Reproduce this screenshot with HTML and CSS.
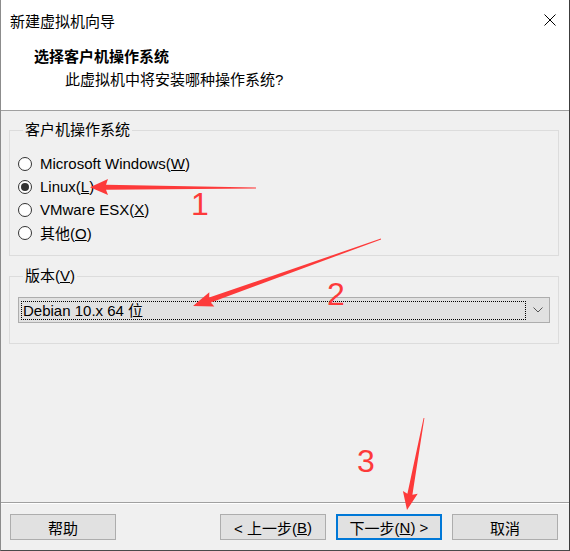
FILE: index.html
```html
<!DOCTYPE html>
<html lang="zh-CN">

<head>
  <meta charset="UTF-8" />
  <title>新建虚拟机向导</title>
  <link rel="stylesheet" href="styles.css">
</head>

<body>
  <div class="window">
    <!-- 顶部白色区域 -->
    <div class="top">
      <div class="titlebar">
        <span class="title">新建虚拟机向导</span>
        <svg class="close" width="12" height="12" viewBox="0 0 12 12">
          <path d="M0.5 0.5L11.5 11.5M11.5 0.5L0.5 11.5" stroke="#000" stroke-width="1" fill="none" />
        </svg>
      </div>
      <p class="heading">选择客户机操作系统</p>
      <p class="subtitle">此虚拟机中将安装哪种操作系统?</p>
    </div>

    <!-- 内容 -->
    <div class="content">
      <fieldset class="group os">
        <legend>客户机操作系统</legend>
        <div class="radio-row"><span class="ring"></span><span>Microsoft Windows(<u>W</u>)</span></div>
        <div class="radio-row"><span class="ring on"></span><span>Linux(<u>L</u>)</span></div>
        <div class="radio-row"><span class="ring"></span><span>VMware ESX(<u>X</u>)</span></div>
        <div class="radio-row"><span class="ring"></span><span>其他(<u>O</u>)</span></div>
      </fieldset>

      <fieldset class="group version">
        <legend>版本(<u>V</u>)</legend>
        <div class="combo">
          <div class="combo-focus">Debian 10.x 64 位</div>
          <div class="combo-arrow">
            <svg width="10" height="6" viewBox="0 0 10 6">
              <polyline points="0.5,0.5 5,5 9.5,0.5" stroke="#555" stroke-width="1" fill="none" />
            </svg>
          </div>
        </div>
      </fieldset>
    </div>

    <!-- 底部按钮 -->
    <div class="footer">
      <button class="btn">帮助</button>
      <div class="nav">
        <button class="btn">&lt; 上一步(<u>B</u>)</button>
        <button class="btn primary">下一步(<u>N</u>) &gt;</button>
        <button class="btn">取消</button>
      </div>
    </div>
  </div>

  <!-- 红色标注 -->
  <svg class="marks" width="570" height="551" viewBox="0 0 570 551">
    <polygon points="256,187.6 106,184.8 108,179 90,187.3 108,195 106,189.8 256,188.4" />
    <polygon points="380.9,238.6 209.2,297.6 209.3,292.2 193,306 214.3,306.4 210.8,302.4 381.1,239.4" />
    <polygon points="423.6,417.9 407.4,493.8 402.9,490.9 407,510 417.7,493.7 412.4,494.8 424.4,418.1" />
    <text x="191" y="215">1</text>
    <text x="327" y="305">2</text>
    <text x="357" y="472">3</text>
  </svg>
</body>

</html>
```

FILE: styles.css
```css
* {
  margin: 0;
  padding: 0;
  box-sizing: border-box;
}

body {
  position: relative;
  width: 570px;
  height: 551px;
  font: 15px "Liberation Sans", "Noto Sans CJK SC", sans-serif;
  color: #000;
  background: #fff;
}

.window {
  width: 570px;
  height: 551px;
  display: flex;
  flex-direction: column;
  background: #f0f0f0;
  border-left: 1px solid #8c8c8c;
  border-right: 1px solid #3c3c3c;
  border-bottom: 1px solid #4a4a4a;
}

.top {
  height: 111px;
  background: #fff;
  border-bottom: 1px solid #a0a0a0;
}

.titlebar {
  height: 40px;
  display: flex;
  align-items: center;
  justify-content: space-between;
  padding: 0 13px 0 9px;
}

.heading {
  margin-top: 7px;
  padding-left: 33px;
  line-height: 20px;
  font-weight: bold;
}

.subtitle {
  margin-top: 3px;
  padding-left: 64px;
  line-height: 20px;
}

.content {
  flex: 1;
  padding: 9px 10px 0 8px;
}

.group {
  border: 1px solid #dcdcdc;
  padding: 12px 8px 11px 8px;
}

.group legend {
  margin-left: 5px;
  padding: 0 2px;
  line-height: 20px;
}

.version {
  margin-top: 10px;
  padding: 11px 8px 20px 8px;
}

.radio-row {
  display: flex;
  align-items: center;
  height: 23px;
  gap: 8px;
}

.ring {
  width: 14px;
  height: 14px;
  border: 1px solid #333;
  border-radius: 50%;
  background: #fff;
  display: flex;
  align-items: center;
  justify-content: center;
}

.ring.on::after {
  content: "";
  width: 8px;
  height: 8px;
  border-radius: 50%;
  background: #333;
}

.combo {
  height: 26px;
  display: flex;
  border: 1px solid #adadad;
  background: #e1e1e1;
}

.combo-focus {
  flex: 1;
  margin: 3px 0 2px 2px;
  padding-left: 1px;
  border: 1px dotted #000;
  line-height: 17px;
}

.combo-arrow {
  width: 23px;
  display: flex;
  align-items: center;
  justify-content: center;
}

.footer {
  display: flex;
  border-top: 1px solid #a0a0a0;
  box-shadow: inset 0 1px #fff;
  padding: 11px 11px 10px 9px;
}

.nav {
  display: flex;
  gap: 10px;
  margin-left: auto;
}

.btn {
  width: 106px;
  height: 26px;
  border: 1px solid #adadad;
  background: #e1e1e1;
  font: inherit;
  color: #000;
  display: flex;
  align-items: center;
  justify-content: center;
}

.btn.primary {
  border: 2px solid #0078d7;
}

.marks {
  position: absolute;
  top: 0;
  left: 0;
  pointer-events: none;
}

.marks polygon {
  fill: #fd3a3a;
}

.marks text {
  fill: #fd3a3a;
  font: 32px "Liberation Sans", sans-serif;
}
```
